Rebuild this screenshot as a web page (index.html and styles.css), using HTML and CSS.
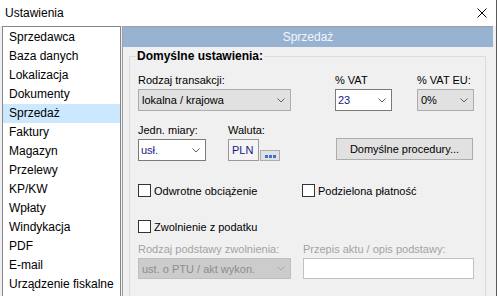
FILE: index.html
```html
<!DOCTYPE html>
<html lang="pl">
<head>
<meta charset="utf-8">
<title>Ustawienia</title>
<link rel="stylesheet" href="styles.css">
</head>
<body>
<div class="window">
  <div class="titlebar">
    <span class="title">Ustawienia</span>
    <svg class="close" width="10" height="10" viewBox="0 0 10 10"><path d="M0.5 0.5L9.5 9.5M9.5 0.5L0.5 9.5" stroke="#000" stroke-width="1" fill="none"/></svg>
  </div>
  <div class="main">
    <ul class="nav">
      <li>Sprzedawca</li>
      <li>Baza danych</li>
      <li>Lokalizacja</li>
      <li>Dokumenty</li>
      <li class="active">Sprzedaż</li>
      <li>Faktury</li>
      <li>Magazyn</li>
      <li>Przelewy</li>
      <li>KP/KW</li>
      <li>Wpłaty</li>
      <li>Windykacja</li>
      <li>PDF</li>
      <li>E-mail</li>
      <li>Urządzenie fiskalne</li>
    </ul>
    <div class="panel">
      <div class="panel-head">Sprzedaż</div>
      <fieldset class="group">
        <legend>Domyślne ustawienia:</legend>
        <div class="row r1">
          <div class="field f-trans">
            <span class="lbl">Rodzaj transakcji:</span>
            <div class="combo gray"><span class="val">lokalna / krajowa</span><svg class="chev" width="8" height="5" viewBox="0 0 8 5"><path d="M0.5 0.5L4 4L7.5 0.5" stroke="#606060" fill="none"/></svg></div>
          </div>
          <div class="field f-vat">
            <span class="lbl">% VAT</span>
            <div class="combo white"><span class="val navy">23</span><svg class="chev" width="8" height="5" viewBox="0 0 8 5"><path d="M0.5 0.5L4 4L7.5 0.5" stroke="#606060" fill="none"/></svg></div>
          </div>
          <div class="field f-vateu">
            <span class="lbl">% VAT EU:</span>
            <div class="combo gray"><span class="val">0%</span><svg class="chev" width="8" height="5" viewBox="0 0 8 5"><path d="M0.5 0.5L4 4L7.5 0.5" stroke="#606060" fill="none"/></svg></div>
          </div>
        </div>
        <div class="row r2">
          <div class="field f-unit">
            <span class="lbl">Jedn. miary:</span>
            <div class="combo white"><span class="val navy">usł.</span><svg class="chev" width="8" height="5" viewBox="0 0 8 5"><path d="M0.5 0.5L4 4L7.5 0.5" stroke="#606060" fill="none"/></svg></div>
          </div>
          <div class="field f-cur">
            <span class="lbl">Waluta:</span>
            <div class="cur">
              <div class="cur-box navy">PLN</div>
              <div class="dots"><i></i><i></i><i></i></div>
            </div>
          </div>
          <div class="btn">Domyślne procedury...</div>
        </div>
        <div class="row r3">
          <div class="check c-first"><span class="box"></span><span>Odwrotne obciążenie</span></div>
          <div class="check"><span class="box"></span><span>Podzielona płatność</span></div>
        </div>
        <div class="row r4">
          <div class="check"><span class="box"></span><span>Zwolnienie z podatku</span></div>
        </div>
        <div class="row r5">
          <div class="field f-basis">
            <span class="lbl dis">Rodzaj podstawy zwolnienia:</span>
            <div class="combo disabled"><span class="val">ust. o PTU / akt wykon.</span><svg class="chev" width="8" height="5" viewBox="0 0 8 5"><path d="M0.5 0.5L4 4L7.5 0.5" stroke="#a8a8a8" fill="none"/></svg></div>
          </div>
          <div class="field f-law">
            <span class="lbl dis">Przepis aktu / opis podstawy:</span>
            <div class="input"></div>
          </div>
        </div>
      </fieldset>
    </div>
  </div>
</div>
</body>
</html>
```
FILE: styles.css
```css
html, body {
  margin: 0;
  padding: 0;
}
body {
  width: 497px;
  height: 296px;
  overflow: hidden;
  background: #f0f0f0;
  font: 12px "Liberation Sans", Arial, sans-serif;
  color: #000;
}
.window {
  box-sizing: border-box;
  height: 296px;
  border-right: 1px solid #5a5a5a;
  display: flex;
  flex-direction: column;
}
.titlebar {
  box-sizing: border-box;
  height: 26px;
  flex: none;
  background: #fff;
  display: flex;
  align-items: center;
  justify-content: space-between;
  padding: 0 9px 0 5px;
}
.title {
  line-height: 14px;
}
.close {
  display: block;
}
.main {
  flex: 1;
  min-height: 0;
  display: flex;
  padding-left: 2px;
  overflow: hidden;
}
.nav {
  box-sizing: border-box;
  width: 119px;
  flex: none;
  margin: 0;
  padding: 1px 0 0;
  list-style: none;
  background: #fff;
  border: 1px solid #828790;
  border-bottom: none;
}
.nav li {
  height: 19px;
  line-height: 19px;
  padding-left: 6px;
  white-space: nowrap;
}
.nav li.active {
  background: #cce8ff;
}
.panel {
  box-sizing: border-box;
  width: 371px;
  flex: none;
  margin-left: 1px;
  border-left: 1px solid #a0a0a0;
  border-top: 1px solid #a0a0a0;
}
.panel-head {
  height: 20px;
  line-height: 20px;
  background: #98b2d1;
  color: #f4f6fa;
  text-align: center;
}
.group {
  box-sizing: border-box;
  width: 357px;
  height: 300px;
  margin: 2px 0 0 6px;
  padding: 9px 0 0 8px;
  border: 1px solid #dcdcdc;
  min-width: 0;
  font-size: 11px;
}
.group legend {
  font-size: 12px;
  font-weight: bold;
  line-height: 14px;
  padding: 0 1px;
  margin-left: -2px;
}
.row {
  display: flex;
  align-items: flex-end;
}
.field {
  display: flex;
  flex-direction: column;
}
.lbl {
  line-height: 16px;
  margin-bottom: 1px;
  white-space: nowrap;
}
.lbl.dis {
  color: #a3a3a3;
}
.combo {
  box-sizing: border-box;
  height: 22px;
  display: flex;
  align-items: center;
  justify-content: space-between;
  padding: 0 5px 0 3px;
  border: 1px solid #adadad;
  white-space: nowrap;
}
.combo.gray {
  background: #e1e1e1;
}
.combo.white {
  background: #fff;
  border-color: #7a7a7a;
  padding-left: 2px;
}
.combo.disabled {
  height: 21px;
  background: #cccccc;
  border-color: #bfbfbf;
  color: #8d8d8d;
}
.chev {
  display: block;
  flex: none;
}
.navy {
  color: #17178a;
}
.f-trans { width: 153px; }
.f-vat { width: 57px; margin-left: 44px; }
.f-vateu { width: 57px; margin-left: 25px; }
.r2 { margin-top: 11px; }
.f-unit { width: 68px; }
.f-cur { margin-left: 22px; }
.cur {
  display: flex;
  align-items: flex-end;
}
.cur-box {
  box-sizing: border-box;
  width: 31px;
  height: 22px;
  line-height: 20px;
  padding-left: 3px;
  background: #f4f4f4;
  border: 1px solid #9a9a9a;
}
.dots {
  box-sizing: border-box;
  width: 20px;
  height: 11px;
  margin-left: 1px;
  background: #e1e1e1;
  border: 1px solid #adadad;
  display: flex;
  align-items: flex-end;
  justify-content: center;
  gap: 1px;
  padding-bottom: 2px;
}
.dots i {
  display: block;
  width: 3px;
  height: 3px;
  background: #3a76d0;
}
.btn {
  box-sizing: border-box;
  width: 137px;
  height: 22px;
  margin: 0 0 1px 56px;
  line-height: 20px;
  text-align: center;
  background: #e1e1e1;
  border: 1px solid #adadad;
  white-space: nowrap;
}
.r3 { margin-top: 23px; }
.r4 { margin-top: 23px; }
.check {
  display: flex;
  align-items: center;
  height: 13px;
  white-space: nowrap;
}
.check.c-first {
  width: 164px;
}
.box {
  box-sizing: border-box;
  width: 13px;
  height: 13px;
  flex: none;
  background: #fff;
  border: 1px solid #333;
  margin-right: 3px;
}
.r5 { margin-top: 8px; }
.f-basis { width: 153px; }
.f-law { width: 171px; margin-left: 12px; }
.input {
  box-sizing: border-box;
  height: 21px;
  background: #fff;
  border: 1px solid #c2c2c2;
}
```
